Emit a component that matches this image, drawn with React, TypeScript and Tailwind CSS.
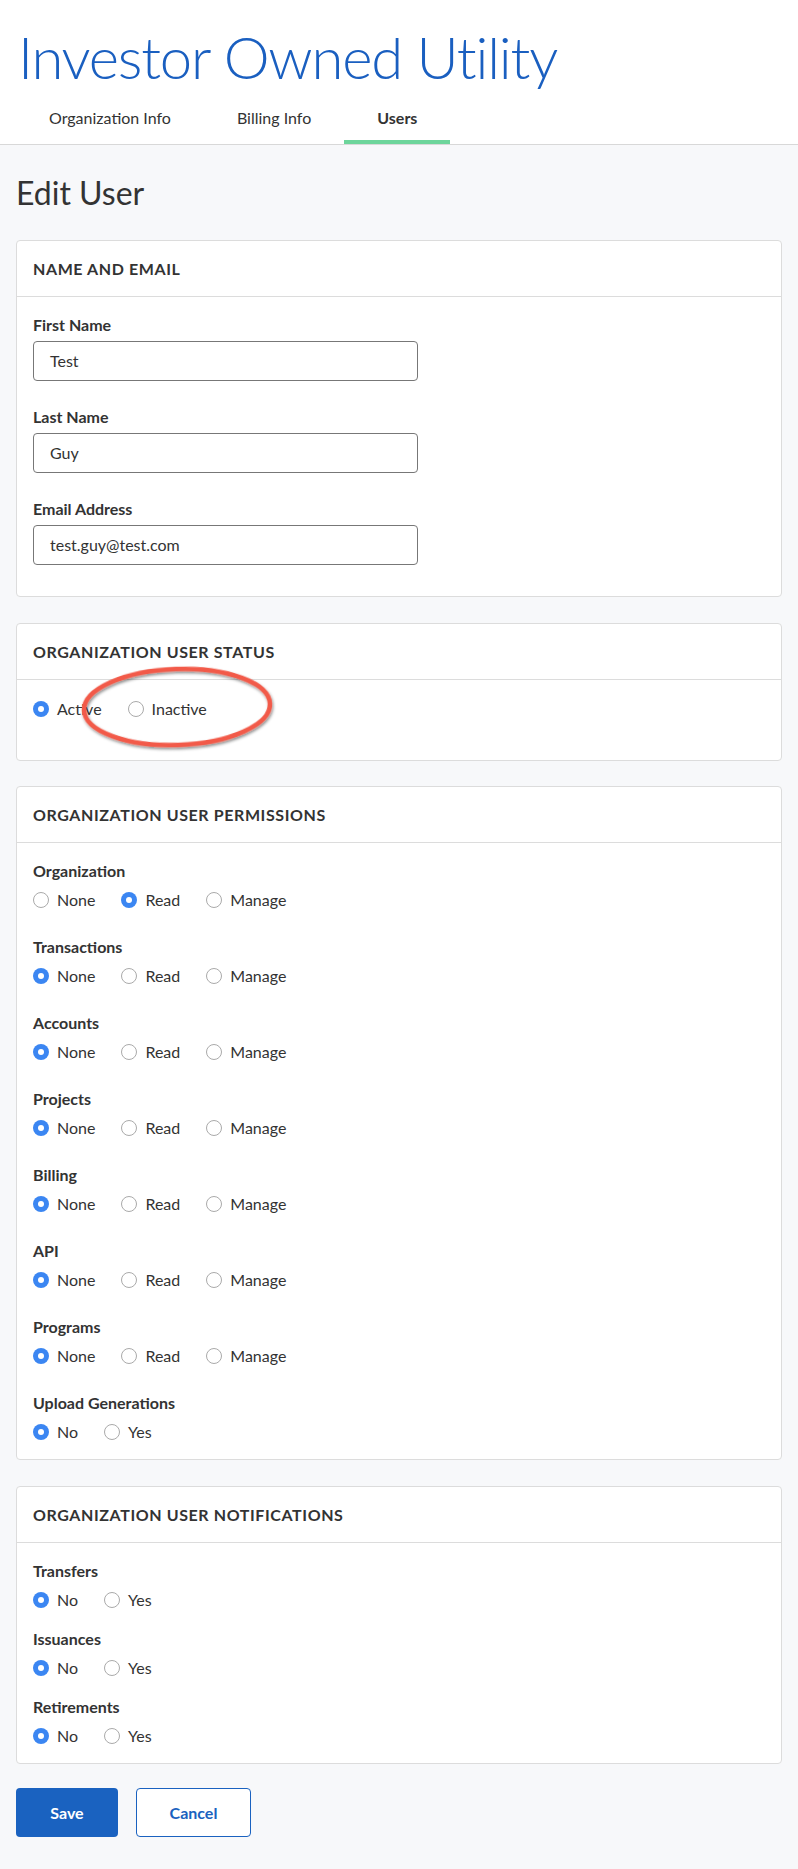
import React from "react";

const font = { fontFamily: "Lato, 'Noto Sans', sans-serif" };

type RadioProps = { label: string; checked?: boolean };

function Radio({ label, checked }: RadioProps) {
  return (
    <label className="flex items-center gap-2 text-[16px] text-[#333]">
      {checked ? (
        <span className="flex h-4 w-4 items-center justify-center rounded-full bg-[#3b86f2]">
          <span className="h-[6px] w-[6px] rounded-full bg-white" />
        </span>
      ) : (
        <span className="h-4 w-4 rounded-full border border-[#aaa] bg-white" />
      )}
      {label}
    </label>
  );
}

function Card({ title, children, className = "" }: { title: string; children: React.ReactNode; className?: string }) {
  return (
    <section className={`relative rounded border border-[#dcdcdc] bg-white ${className}`}>
      <div className="flex h-[56px] items-center border-b border-[#dcdcdc] px-4">
        <h2 className="text-[16px] font-bold uppercase tracking-[0.6px] text-[#333]">{title}</h2>
      </div>
      {children}
    </section>
  );
}

function Field({ label, value }: { label: string; value: string }) {
  return (
    <div>
      <div className="text-[16px] font-bold leading-5 text-[#333]">{label}</div>
      <div className="mt-[6px] flex h-10 w-[385px] items-center rounded border border-[#777] px-4 text-[16px] text-[#333]">
        {value}
      </div>
    </div>
  );
}

function Group({ label, options, selected }: { label: string; options: string[]; selected: number }) {
  return (
    <div>
      <div className="text-[16px] font-bold leading-5 text-[#333]">{label}</div>
      <div className="mt-[7px] flex h-6 items-center gap-[26px]">
        {options.map((o, i) => (
          <Radio key={o} label={o} checked={i === selected} />
        ))}
      </div>
    </div>
  );
}

const lvl = ["None", "Read", "Manage"];
const yn = ["No", "Yes"];

export default function App() {
  return (
    <div style={font} className="min-h-[1869px] bg-[#f7f8fa]">
      <header className="border-b border-[#d8d8d8] bg-white px-4">
        <h1 className="pt-[28px] pl-[2px] text-[58px] font-light leading-none tracking-[-1.2px] text-[#1a5fc0]">
          Investor Owned Utility
        </h1>
        <nav className="mt-[6px] flex h-[52px]">
          {["Organization Info", "Billing Info", "Users"].map((t) => (
            <div
              key={t}
              className={`flex items-center border-b-4 px-[33px] pt-1 text-[16px] ${
                t === "Users" ? "border-[#6dd59b] font-bold text-[#333]" : "border-transparent text-[#333]"
              }`}
            >
              {t}
            </div>
          ))}
        </nav>
      </header>

      <main className="px-4 pb-8">
        <h1 className="pt-[28px] text-[32px] leading-10 text-[#333]">Edit User</h1>

        <Card title="Name and Email" className="mt-[27px]">
          <div className="flex flex-col gap-[26px] px-4 pt-[18px] pb-[31px]">
            <Field label="First Name" value="Test" />
            <Field label="Last Name" value="Guy" />
            <Field label="Email Address" value="test.guy@test.com" />
          </div>
        </Card>

        <Card title="Organization User Status" className="mt-[26px]">
          <div className="mt-[17px] mb-[39px] flex h-6 items-center gap-[26px] px-4">
            <Radio label="Active" checked />
            <Radio label="Inactive" />
          </div>
          <svg
            className="pointer-events-none absolute left-[60px] top-[37px]"
            width="202"
            height="94"
            viewBox="0 0 202 94"
          >
            <defs>
              <filter id="sh" x="-10%" y="-20%" width="120%" height="140%">
                <feDropShadow dx="1" dy="2" stdDeviation="1.5" floodColor="#000" floodOpacity="0.45" />
              </filter>
            </defs>
            <ellipse
              cx="100"
              cy="46"
              rx="93"
              ry="38"
              fill="none"
              stroke="#f25a48"
              strokeWidth="4.5"
              filter="url(#sh)"
              transform="rotate(-2 100 46)"
            />
          </svg>
        </Card>

        <Card title="Organization User Permissions" className="mt-[25px]">
          <div className="flex flex-col gap-[25px] px-4 pt-[18px] pb-[15px]">
            <Group label="Organization" options={lvl} selected={1} />
            <Group label="Transactions" options={lvl} selected={0} />
            <Group label="Accounts" options={lvl} selected={0} />
            <Group label="Projects" options={lvl} selected={0} />
            <Group label="Billing" options={lvl} selected={0} />
            <Group label="API" options={lvl} selected={0} />
            <Group label="Programs" options={lvl} selected={0} />
            <Group label="Upload Generations" options={yn} selected={0} />
          </div>
        </Card>

        <Card title="Organization User Notifications" className="mt-[26px]">
          <div className="flex flex-col gap-[17px] px-4 pt-[18px] pb-[15px]">
            <Group label="Transfers" options={yn} selected={0} />
            <Group label="Issuances" options={yn} selected={0} />
            <Group label="Retirements" options={yn} selected={0} />
          </div>
        </Card>

        <div className="mt-6 flex gap-[18px]">
          <button className="h-[49px] w-[102px] rounded bg-[#1a62c0] text-[16px] font-bold text-white">Save</button>
          <button className="h-[49px] w-[115px] rounded border border-[#1a62c0] bg-white text-[16px] font-bold text-[#1a62c0]">
            Cancel
          </button>
        </div>
      </main>
    </div>
  );
}
